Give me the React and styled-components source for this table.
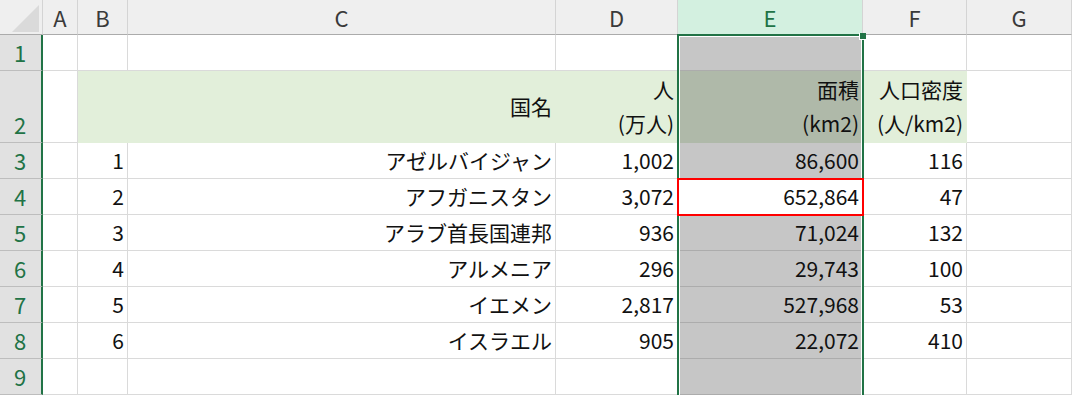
import React from 'react'
import styled, { createGlobalStyle } from 'styled-components'

const GlobalStyle = createGlobalStyle`
    html, body {
        margin: 0;
        background: #ffffff;
        overflow: hidden;
        font-family: "Noto Sans CJK JP", "Noto Sans", sans-serif;
    }
`;

const Sheet = styled.div`
    position: relative;
    display: grid;
    grid-template-columns: 43px 35px 50px 428px 122px 185px 104px 105px;
    grid-template-rows: 35px 36px 72px repeat(7, 36px);
    width: 1072px;
`;

const Corner = styled.div`
    position: relative;
    box-sizing: border-box;
    background: #efefef;
    border-right: 1px solid #d4d4d4;
    border-bottom: 1px solid #ababab;

    &::after {
        content: "";
        position: absolute;
        left: 12px;
        top: 5px;
        width: 27px;
        height: 27px;
        background: #dadada;
        clip-path: polygon(100% 0, 100% 100%, 0 100%);
    }
`;

const ColHead = styled.div`
    box-sizing: border-box;
    display: flex;
    align-items: center;
    justify-content: center;
    background: ${p => (p.$active ? '#d3f0e0' : '#efefef')};
    color: ${p => (p.$active ? '#217346' : '#3a3a3a')};
    border-right: 1px solid #d4d4d4;
    border-bottom: 1px solid #ababab;
    font-size: 22px;
    line-height: 1;
    padding-bottom: 1px;
`;

const RowHead = styled.div`
    box-sizing: border-box;
    display: flex;
    flex-direction: column;
    justify-content: flex-end;
    align-items: center;
    background: #e1e1e1;
    color: #217346;
    border-right: 2px solid #217346;
    border-bottom: 1px solid #bdbdbd;
    font-size: 22px;
    line-height: 34px;
    padding: 0 1px 1px 0;
`;

const palette = {
    plain: { bg: '#ffffff', right: '#dadada', bottom: '#dadada' },
    head: { bg: '#e2efda', right: '#e2efda', bottom: '#e2efda' },
    sel: { bg: '#c6c6c6', right: '#c6c6c6', bottom: '#acacac' },
    selHead: { bg: '#afb9a9', right: '#afb9a9', bottom: '#afb9a9' },
    active: { bg: '#ffffff', right: '#dadada', bottom: '#dadada' },
};

const Cell = styled.div`
    box-sizing: border-box;
    display: flex;
    flex-direction: column;
    justify-content: ${p => (p.$middle ? 'center' : 'flex-end')};
    align-items: flex-end;
    background: ${p => palette[p.$kind].bg};
    border-right: 1px solid ${p => palette[p.$kind].right};
    border-bottom: 1px solid ${p => palette[p.$kind].bottom};
    padding: 0 3px 1px 0;
    font-size: 21px;
    line-height: 34px;
    color: #111111;
    white-space: nowrap;
`;

const Selection = styled.div`
    position: absolute;
    grid-column: 6 / 7;
    grid-row: 2 / 11;
    top: -1px;
    left: -1px;
    right: -1px;
    bottom: -4px;
    border: 2px solid #217346;
    box-shadow: inset 0 0 0 1px #ffffff;
    pointer-events: none;
`;

const FillHandle = styled.div`
    position: absolute;
    top: -3px;
    right: -4px;
    width: 6px;
    height: 6px;
    background: #217346;
    border-left: 1px solid #ffffff;
    border-bottom: 1px solid #ffffff;
`;

const Marker = styled.div`
    position: absolute;
    grid-column: ${p => p.$col} / ${p => p.$col + 1};
    grid-row: ${p => p.$row} / ${p => p.$row + 1};
    top: -1px;
    left: -1px;
    right: -1px;
    bottom: -1px;
    border: 2px solid #ff0000;
    pointer-events: none;
`;

const columns = ['A', 'B', 'C', 'D', 'E', 'F', 'G'];

const rows = [
    ['', '', '', '', '', '', ''],
    ['', '', '国名', ['人', '(万人)'], ['面積', '(km2)'], ['人口密度', '(人/km2)'], ''],
    ['', '1', 'アゼルバイジャン', '1,002', '86,600', '116', ''],
    ['', '2', 'アフガニスタン', '3,072', '652,864', '47', ''],
    ['', '3', 'アラブ首長国連邦', '936', '71,024', '132', ''],
    ['', '4', 'アルメニア', '296', '29,743', '100', ''],
    ['', '5', 'イエメン', '2,817', '527,968', '53', ''],
    ['', '6', 'イスラエル', '905', '22,072', '410', ''],
    ['', '', '', '', '', '', ''],
];

function kindOf(r, c) {
    if (c === 4) {
        if (r === 1) return 'selHead';
        if (r === 3) return 'active';
        return 'sel';
    }
    if (r === 1 && c >= 1 && c <= 5) return 'head';
    return 'plain';
}

export default function App() {
    return (
        <>
            <GlobalStyle />
            <Sheet>
                <Corner />
                {columns.map(c => (
                    <ColHead key={c} $active={c === 'E'}>{c}</ColHead>
                ))}
                {rows.map((cells, r) => (
                    <React.Fragment key={r}>
                        <RowHead>{r + 1}</RowHead>
                        {cells.map((v, c) => (
                            <Cell key={c} $kind={kindOf(r, c)} $middle={r === 1}>
                                {Array.isArray(v) ? v.map(line => <span key={line}>{line}</span>) : v}
                            </Cell>
                        ))}
                    </React.Fragment>
                ))}
                <Selection>
                    <FillHandle />
                </Selection>
                <Marker $col={6} $row={5} />
            </Sheet>
        </>
    )
}
